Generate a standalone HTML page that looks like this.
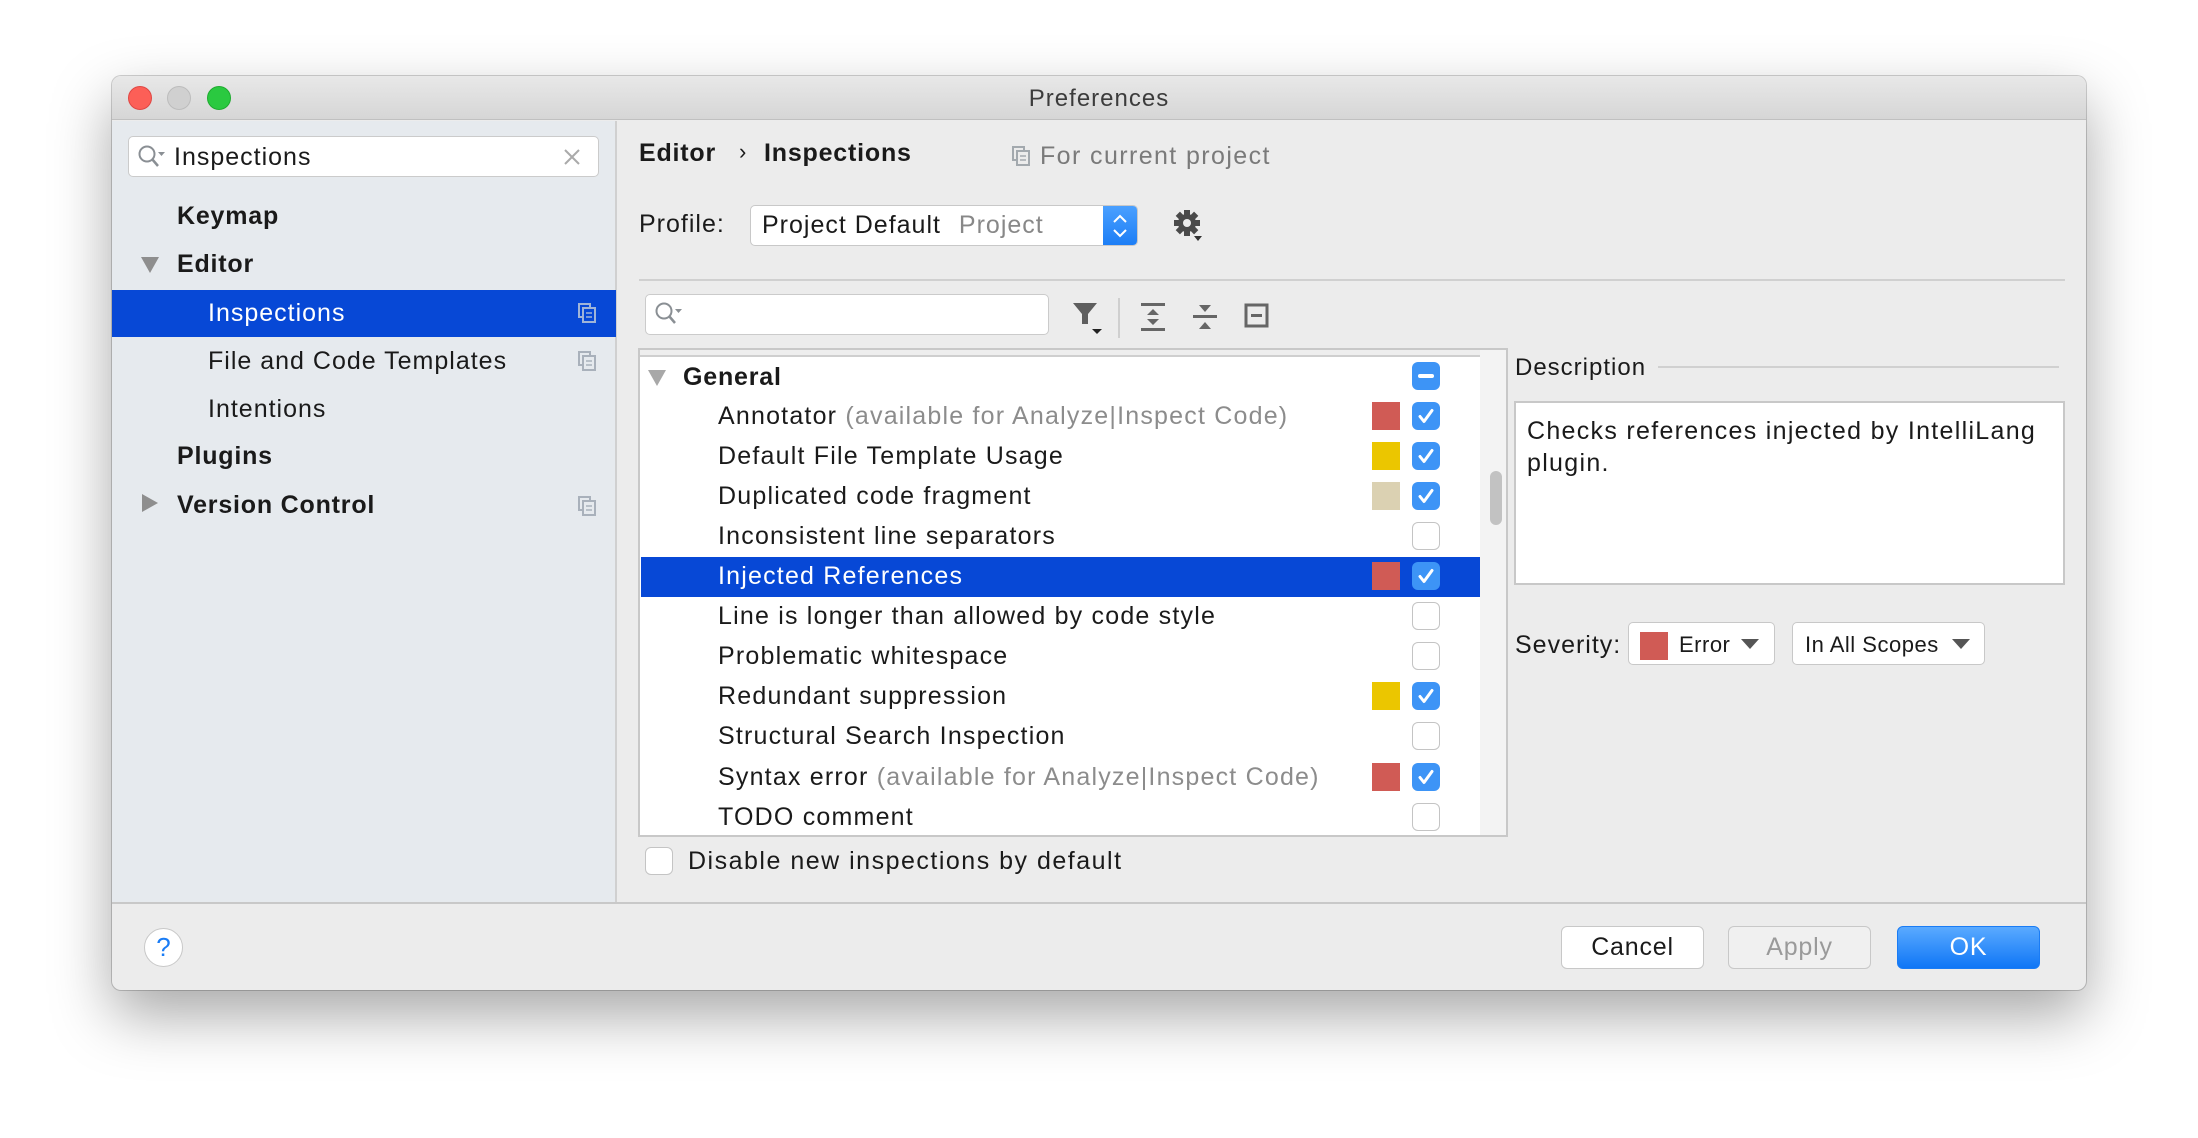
<!DOCTYPE html>
<html><head><meta charset="utf-8"><style>
*{box-sizing:border-box;margin:0;padding:0}
body{width:2198px;height:1138px;background:#fff;font-family:"Liberation Sans",sans-serif;position:relative;overflow:hidden;color:#1a1a1a}
.a{position:absolute}
.win{left:112px;top:76px;width:1974px;height:914px;background:#ececec;border-radius:9px;box-shadow:0 25px 60px rgba(0,0,0,.35),0 0 0 1px rgba(0,0,0,.18);overflow:hidden}
.t{font-size:24px;white-space:nowrap;line-height:1}
.b{font-weight:bold}
.ls{letter-spacing:1.2px}
.cb{width:28px;height:28px;border-radius:6px;background:#fff;border:1.5px solid #c4c4c4}
.cb.on{background:#3d94f6;border:none}
.sq{width:28px;height:28px}
.btn{height:43px;border-radius:6px;border:1px solid #c8c8c8;background:#fff;font-size:25px;text-align:center;line-height:41px;letter-spacing:0.8px}
</style></head><body>
<div class="a win">
 <div class="a" style="left:0;top:0;width:1974px;height:44px;background:linear-gradient(#e8e8e8,#d6d6d6);border-bottom:1px solid #c0c0c0"></div>
 <div class="a" style="left:16px;top:10px;width:24px;height:24px;border-radius:50%;background:#fc5f57;border:1px solid #df4744"></div>
 <div class="a" style="left:55px;top:10px;width:24px;height:24px;border-radius:50%;background:#d0d0d0;border:1px solid #bcbcbc"></div>
 <div class="a" style="left:95px;top:10px;width:24px;height:24px;border-radius:50%;background:#2ac940;border:1px solid #1eab2f"></div>
 <div class="a t" style="left:0;width:1974px;text-align:center;top:11px;font-size:24px;color:#3c3c3c;letter-spacing:1px">Preferences</div>

 <div class="a" style="left:0;top:45px;width:505px;height:782px;background:#e6eaee;border-right:2px solid #d0d0d0"></div>
 <div class="a" style="left:16px;top:60px;width:471px;height:41px;background:#fff;border:1.5px solid #cbcbcb;border-radius:5px"></div>
 <svg class="a" style="left:24px;top:67px" width="34" height="28" viewBox="0 0 34 28"><circle cx="11" cy="11" r="7.5" fill="none" stroke="#8a8f94" stroke-width="2"/><line x1="16" y1="16" x2="22" y2="23" stroke="#8a8f94" stroke-width="2.5"/><path d="M22 9h7l-3.5 4z" fill="#8a8f94"/></svg>
 <div class="a t" style="left:62px;top:69px;font-size:25px;letter-spacing:1px">Inspections</div>
 <svg class="a" style="left:451px;top:72px" width="18" height="18"><path d="M2 2L16 16M16 2L2 16" stroke="#aaa" stroke-width="2"/></svg>

 <div class="a t b" style="left:65px;top:128px;font-size:25px;letter-spacing:.8px">Keymap</div>
 <svg class="a" style="left:29px;top:181px" width="18" height="16"><path d="M0 0h18L9 16z" fill="#8e8e8e"/></svg>
 <div class="a t b" style="left:65px;top:176px;font-size:25px;letter-spacing:.8px">Editor</div>
 <div class="a" style="left:0;top:214px;width:504px;height:47px;background:#0748d6"></div>
 <div class="a t" style="left:96px;top:225px;font-size:25px;color:#fff;letter-spacing:1px">Inspections</div>
 <div class="a t" style="left:96px;top:273px;font-size:25px;letter-spacing:1px">File and Code Templates</div>
 <div class="a t" style="left:96px;top:321px;font-size:25px;letter-spacing:1px">Intentions</div>
 <div class="a t b" style="left:65px;top:368px;font-size:25px;letter-spacing:.8px">Plugins</div>
 <svg class="a" style="left:30px;top:418px" width="16" height="18"><path d="M0 0v18l16-9z" fill="#8e8e8e"/></svg>
 <div class="a t b" style="left:65px;top:417px;font-size:25px;letter-spacing:.8px">Version Control</div>
 <svg class="a" style="left:466px;top:227px" width="18" height="20"><rect x="1" y="1" width="11" height="13" fill="none" stroke="#9fb4d8" stroke-width="2"/><rect x="5" y="5" width="12" height="14" fill="#0748d6" stroke="#9fb4d8" stroke-width="2"/><path d="M8 10h6M8 14h6" stroke="#9fb4d8" stroke-width="1.5"/></svg>
 <svg class="a" style="left:466px;top:275px" width="18" height="20"><rect x="1" y="1" width="11" height="13" fill="none" stroke="#a9b1bb" stroke-width="2"/><rect x="5" y="5" width="12" height="14" fill="#e6eaee" stroke="#a9b1bb" stroke-width="2"/><path d="M8 10h6M8 14h6" stroke="#a9b1bb" stroke-width="1.5"/></svg>
 <svg class="a" style="left:466px;top:420px" width="18" height="20"><rect x="1" y="1" width="11" height="13" fill="none" stroke="#a9b1bb" stroke-width="2"/><rect x="5" y="5" width="12" height="14" fill="#e6eaee" stroke="#a9b1bb" stroke-width="2"/><path d="M8 10h6M8 14h6" stroke="#a9b1bb" stroke-width="1.5"/></svg>

 <div class="a t b" style="left:527px;top:65px;font-size:25px;letter-spacing:.8px">Editor</div>
 <div class="a t" style="left:627px;top:65px;font-size:22px">›</div>
 <div class="a t b" style="left:652px;top:65px;font-size:25px;letter-spacing:.8px">Inspections</div>
 <svg class="a" style="left:900px;top:70px" width="18" height="20"><rect x="1" y="1" width="11" height="13" fill="none" stroke="#a3a9ae" stroke-width="2"/><rect x="5" y="5" width="12" height="14" fill="#ececec" stroke="#a3a9ae" stroke-width="2"/><path d="M8 10h6M8 14h6" stroke="#a3a9ae" stroke-width="1.5"/></svg>
 <div class="a t" style="left:928px;top:68px;font-size:25px;color:#7a7a7a;letter-spacing:1.4px">For current project</div>

 <div class="a t" style="left:527px;top:136px;font-size:25px;letter-spacing:1px">Profile:</div>
 <div class="a" style="left:638px;top:129px;width:388px;height:41px;background:#fff;border:1.5px solid #c8c8c8;border-radius:5px;overflow:hidden">
  <div class="a" style="right:0;top:0;width:34px;height:41px;background:linear-gradient(#4aa0ff,#1a7cf5)"></div>
  <svg class="a" style="right:8px;top:7px" width="18" height="26"><path d="M3 9l6-6 6 6M3 17l6 6 6-6" stroke="#fff" stroke-width="2" fill="none"/></svg>
 </div>
 <div class="a t" style="left:650px;top:137px;font-size:25px;letter-spacing:1px">Project Default <span style="color:#888;margin-left:10px">Project</span></div>
 <svg class="a" style="left:1060px;top:132px" width="36" height="36" viewBox="0 0 36 36"><g transform="translate(15 15)" fill="#4a4a4a"><circle r="9"/><g><rect x="-3" y="-13" width="6" height="26"/><rect x="-3" y="-13" width="6" height="26" transform="rotate(45)"/><rect x="-3" y="-13" width="6" height="26" transform="rotate(90)"/><rect x="-3" y="-13" width="6" height="26" transform="rotate(135)"/></g><circle r="4" fill="#ececec"/></g><path d="M22 28h8l-4 5z" fill="#333"/></svg>

 <div class="a" style="left:527px;top:203px;width:1426px;height:2px;background:#d0d0d0"></div>

 <div class="a" style="left:533px;top:218px;width:404px;height:41px;background:#fff;border:1.5px solid #cbcbcb;border-radius:5px"></div>
 <svg class="a" style="left:541px;top:224px" width="34" height="28" viewBox="0 0 34 28"><circle cx="11" cy="11" r="7.5" fill="none" stroke="#8a8f94" stroke-width="2"/><line x1="16" y1="16" x2="22" y2="23" stroke="#8a8f94" stroke-width="2.5"/><path d="M22 9h7l-3.5 4z" fill="#8a8f94"/></svg>
 <svg class="a" style="left:960px;top:223px" width="40" height="36"><path d="M1 4h24l-9 11v10h-6V15z" fill="#5e5e5e"/><path d="M20 30h10l-5 5z" fill="#222"/></svg>
 <div class="a" style="left:1006px;top:222px;width:2px;height:40px;background:#cfcfcf"></div>
 <svg class="a" style="left:1028px;top:225px" width="28" height="32"><rect x="1" y="2" width="24" height="3" fill="#666"/><rect x="1" y="27" width="24" height="3" fill="#666"/><path d="M7 14l6-6 6 6zM7 18l6 6 6-6z" fill="#666"/></svg>
 <svg class="a" style="left:1080px;top:225px" width="28" height="32"><rect x="1" y="14" width="24" height="3" fill="#666"/><path d="M7 4l6 7 6-7zM7 28l6-7 6 7z" fill="#666"/></svg>
 <svg class="a" style="left:1132px;top:227px" width="28" height="28"><rect x="2" y="2" width="21" height="21" fill="none" stroke="#666" stroke-width="3"/><rect x="7" y="11" width="11" height="3" fill="#666"/></svg>

 <div class="a" style="left:526px;top:272px;width:870px;height:489px;background:#fff;border:2px solid #c8c8c8"></div>
 <div class="a" style="left:528px;top:274px;width:840px;height:7px;background:#eee;border-bottom:2px solid #cfcfcf"></div>
 <div class="a" style="left:1368px;top:274px;width:26px;height:485px;background:#f3f3f3"></div>
 <div class="a" style="left:1378px;top:395px;width:12px;height:54px;background:#c2c2c2;border-radius:6px"></div>
 <div class="a" style="left:529px;top:481px;width:839px;height:40px;background:#0748d6"></div>
 <svg class="a" style="left:536px;top:294px" width="18" height="16"><path d="M0 0h18L9 16z" fill="#a8a8a8"/></svg>
 <div class="a t b" style="left:571px;top:289px;font-size:25px;letter-spacing:.8px">General</div>
 <div class="a cb on" style="left:1300px;top:286px"><div class="a" style="left:6px;top:12px;width:16px;height:4px;background:#fff;border-radius:2px"></div></div>

 <div id="rows"></div>

 <div class="a cb" style="left:533px;top:771px"></div>
 <div class="a t" style="left:576px;top:773px;font-size:25px;letter-spacing:1.5px">Disable new inspections by default</div>

 <div class="a t" style="left:1403px;top:280px;font-size:24px;letter-spacing:1px">Description</div>
 <div class="a" style="left:1546px;top:290px;width:401px;height:2px;background:#d0d0d0"></div>
 <div class="a" style="left:1402px;top:325px;width:551px;height:184px;background:#fff;border:2px solid #c8c8c8"></div>
 <div class="a" style="left:1415px;top:339px;font-size:25px;line-height:32px;letter-spacing:1.3px">Checks references injected by IntelliLang<br>plugin.</div>
 <div class="a t" style="left:1403px;top:557px;font-size:25px;letter-spacing:1px">Severity:</div>
 <div class="a" style="left:1516px;top:546px;width:147px;height:43px;background:#fff;border:1.5px solid #c8c8c8;border-radius:5px"></div>
 <div class="a" style="left:1528px;top:556px;width:28px;height:28px;background:#d05b55"></div>
 <div class="a t" style="left:1567px;top:558px;font-size:22px;letter-spacing:.5px">Error</div>
 <svg class="a" style="left:1629px;top:563px" width="18" height="10"><path d="M0 0h18L9 10z" fill="#555"/></svg>
 <div class="a" style="left:1680px;top:546px;width:193px;height:43px;background:#fff;border:1.5px solid #c8c8c8;border-radius:5px"></div>
 <div class="a t" style="left:1693px;top:558px;font-size:22px;letter-spacing:.5px">In All Scopes</div>
 <svg class="a" style="left:1840px;top:563px" width="18" height="10"><path d="M0 0h18L9 10z" fill="#555"/></svg>

 <div class="a" style="left:0;top:826px;width:1974px;height:2px;background:#c8c8c8"></div>
 <div class="a" style="left:32px;top:852px;width:39px;height:39px;border-radius:50%;background:#fff;border:1px solid #c8c8c8;color:#1a7cf5;font-size:26px;text-align:center;line-height:37px">?</div>
 <div class="a btn" style="left:1449px;top:850px;width:143px">Cancel</div>
 <div class="a btn" style="left:1616px;top:850px;width:143px;background:#f0f0f0;color:#9a9a9a">Apply</div>
 <div class="a btn" style="left:1785px;top:850px;width:143px;background:linear-gradient(#5aaaff,#0f76f6);border-color:#1a7cf5;color:#fff">OK</div>
</div>
<script>
var rows=[["Annotator",1,"#d05b55",1],["Default File Template Usage",0,"#ebc600",1],["Duplicated code fragment",0,"#dbd1b2",1],["Inconsistent line separators",0,null,0],["Injected References",0,"#d05b55",1],["Line is longer than allowed by code style",0,null,0],["Problematic whitespace",0,null,0],["Redundant suppression",0,"#ebc600",1],["Structural Search Inspection",0,null,0],["Syntax error",1,"#d05b55",1],["TODO comment",0,null,0]];
var h="";
rows.forEach(function(r,i){var cy=300+40.05*(i+1);var top=Math.round(cy-14);var sel=i==4;
h+='<div class="a t ls" style="font-size:25px;left:606px;top:'+Math.round(cy-12)+'px;color:'+(sel?'#fff':'#1a1a1a')+'">'+r[0]+(r[1]?' <span style="color:#8c8c8c">(available for Analyze|Inspect Code)</span>':'')+'</div>';
if(r[2])h+='<div class="a sq" style="left:1260px;top:'+top+'px;background:'+r[2]+'"></div>';
h+='<div class="a cb'+(r[3]?' on':'')+'" style="left:1300px;top:'+top+'px">'+(r[3]?'<svg width="28" height="28"><path d="M8 14.5l4 5 8-11" stroke="#fff" stroke-width="3" fill="none" stroke-linecap="round" stroke-linejoin="round"/></svg>':'')+'</div>';});
document.getElementById("rows").innerHTML=h;
</script>
</body></html>
